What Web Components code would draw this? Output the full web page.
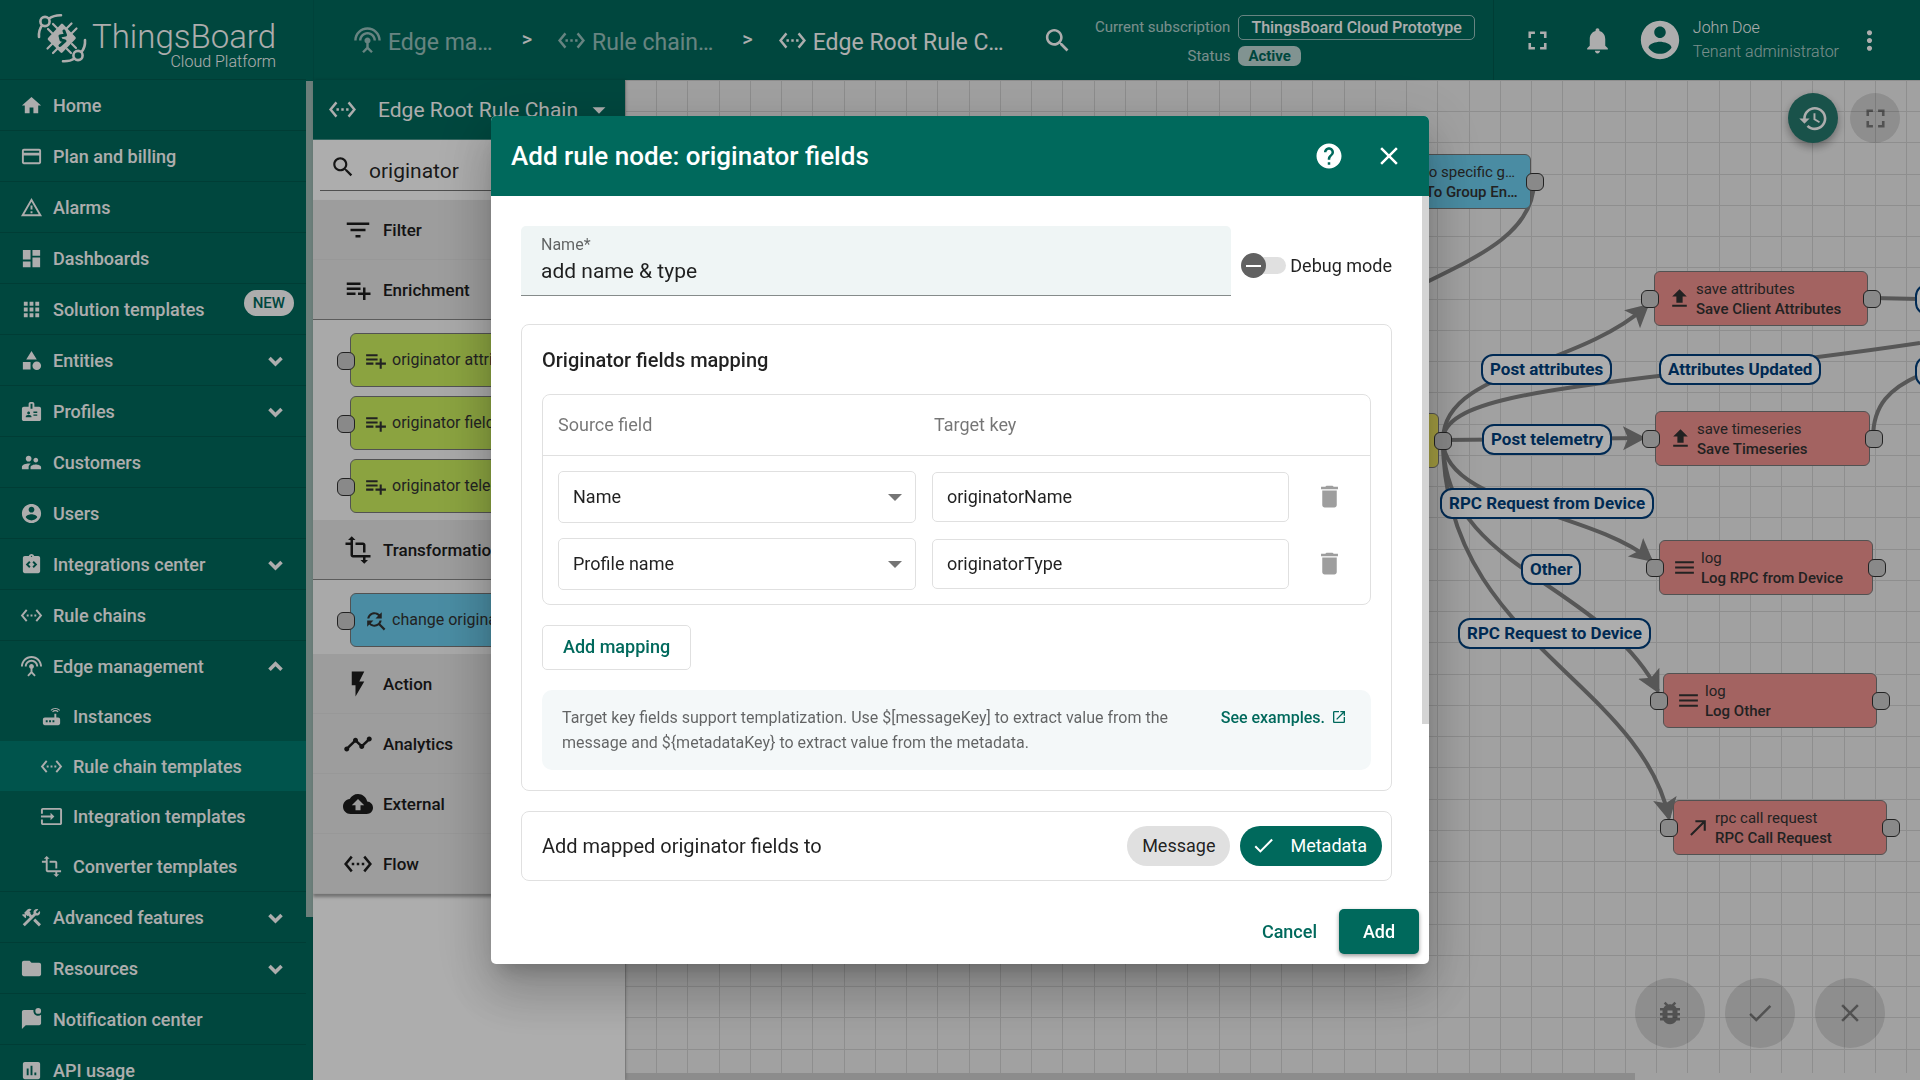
<!DOCTYPE html>
<html lang="en">
<head>
<meta charset="utf-8">
<title>ThingsBoard - Rule chain</title>
<style>
  html, body { height: 100%; }
  body { margin: 0; overflow: hidden; font-family: Roboto, "Open Sans", sans-serif; font-size: 18px; color: rgba(0,0,0,.87); --green: #00695c; --line: #e0e0e0; --ink: rgba(0,0,0,.87); }
</style>
</head>
<body>
<tb-app></tb-app>
<script>
const ICONS = {
  home: '<path d="M10 20v-6h4v6h5v-8h3L12 3 2 12h3v8z"/>',
  card: '<path d="M20 4H4c-1.11 0-1.99.89-1.99 2L2 18c0 1.11.89 2 2 2h16c1.11 0 2-.89 2-2V6c0-1.11-.89-2-2-2zm0 14H4v-7h16v7zm0-10H4V6h16v2z"/>',
  alert: '<path d="M12 2L1 21h22M12 6l7.53 13H4.47M11 10v4h2v-4m-2 6v2h2v-2"/>',
  dashboard: '<path d="M13 3v6h8V3M13 21h8V11h-8M3 21h8v-6H3M3 13h8V3H3v10z"/>',
  apps: '<path d="M4 8h4V4H4v4zm6 12h4v-4h-4v4zm-6 0h4v-4H4v4zm0-6h4v-4H4v4zm6 0h4v-4h-4v4zm6-10v4h4V4h-4zm-6 4h4V4h-4v4zm6 6h4v-4h-4v4zm0 6h4v-4h-4v4z"/>',
  category: '<path d="M12 2l-5.5 9h11zM3 13.5h8v8H3z"/><circle cx="17.5" cy="17.5" r="4.5"/>',
  badge: '<path fill-rule="evenodd" d="M20 7h-5V4c0-1.1-.9-2-2-2h-2c-1.1 0-2 .9-2 2v3H4c-1.1 0-2 .9-2 2v11c0 1.1.9 2 2 2h16c1.1 0 2-.9 2-2V9c0-1.1-.9-2-2-2zM9 12c.83 0 1.5.67 1.5 1.5S9.83 15 9 15s-1.5-.67-1.5-1.5S8.17 12 9 12zm3 6H6v-.75c0-1 2-1.5 3-1.5s3 .5 3 1.5V18zm1-9h-2V4h2v5zm5 7.5h-4V15h4v1.5zm0-3h-4V12h4v1.5z"/>',
  people: '<path d="M16.5 12c1.38 0 2.49-1.12 2.49-2.5S17.88 7 16.5 7 14 8.12 14 9.5s1.12 2.5 2.5 2.5zM9 11c1.66 0 2.99-1.34 2.99-3S10.66 5 9 5 6 6.34 6 8s1.34 3 3 3zm7.5 3c-1.83 0-5.5.92-5.5 2.75V19h11v-2.25c0-1.83-3.67-2.75-5.5-2.75zM9 13c-2.33 0-7 1.17-7 3.5V19h7v-2.25c0-.85.33-2.34 2.37-3.47C10.5 13.1 9.66 13 9 13z"/>',
  account: '<path fill-rule="evenodd" d="M12 2C6.48 2 2 6.48 2 12s4.48 10 10 10 10-4.48 10-10S17.52 2 12 2zm0 3c1.66 0 3 1.34 3 3s-1.34 3-3 3-3-1.34-3-3 1.34-3 3-3zm0 14.2c-2.5 0-4.71-1.28-6-3.22.03-1.99 4-3.08 6-3.08 1.99 0 5.97 1.09 6 3.08-1.29 1.94-3.5 3.22-6 3.22z"/>',
  integration: '<path fill-rule="evenodd" d="M19 3h-4.18C14.4 1.84 13.3 1 12 1s-2.4.84-2.82 2H5c-1.1 0-2 .9-2 2v14c0 1.1.9 2 2 2h14c1.1 0 2-.9 2-2V5c0-1.1-.9-2-2-2zm-8 11.17l-1.41 1.42L6 12l3.59-3.59L11 9.83 8.83 12 11 14.17zM12 4.25c-.41 0-.75-.34-.75-.75s.34-.75.75-.75.75.34.75.75-.34.75-.75.75zm2.41 11.34L13 14.17 15.17 12 13 9.83l1.41-1.41L18 12l-3.59 3.59z"/>',
  chain: '<path d="M7.77 6.76L6.23 5.48.82 12l5.41 6.52 1.54-1.28L3.42 12l4.35-5.24zM7 13h2v-2H7v2zm10-2h-2v2h2v-2zm-6 2h2v-2h-2v2zm6.77-7.52l-1.54 1.28L20.58 12l-4.35 5.24 1.54 1.28L23.18 12l-5.41-6.52z"/>',
  antenna: '<path d="M12 5c-3.87 0-7 3.13-7 7h2c0-2.76 2.24-5 5-5s5 2.24 5 5h2c0-3.87-3.13-7-7-7zm1 9.29c.88-.39 1.5-1.26 1.5-2.29 0-1.38-1.12-2.5-2.5-2.5S9.5 10.62 9.5 12c0 1.02.62 1.9 1.5 2.29v3.3L7.59 21 9 22.41l3-3 3 3L16.41 21 13 17.59v-3.3zM12 1C5.93 1 1 5.93 1 12h2c0-4.97 4.03-9 9-9s9 4.03 9 9h2c0-6.07-4.93-11-11-11z"/>',
  router: '<path fill-rule="evenodd" d="M20.2 5.9l.8-.8C19.6 3.7 17.8 3 16 3s-3.6.7-5 2.1l.8.8C13 4.8 14.5 4.2 16 4.2s3 .6 4.2 1.7zm-.9.8c-.9-.9-2.1-1.4-3.3-1.4s-2.4.5-3.3 1.4l.8.8c.7-.7 1.6-1 2.5-1s1.8.3 2.5 1l.8-.8zM19 13h-2V9h-2v4H5c-1.1 0-2 .9-2 2v4c0 1.1.9 2 2 2h14c1.1 0 2-.9 2-2v-4c0-1.1-.9-2-2-2zM8 18H6v-2h2v2zm3.5 0h-2v-2h2v2zm3.5 0h-2v-2h2v2z"/>',
  input: '<path d="M21 3.01H3c-1.1 0-2 .9-2 2V9h2V4.99h18v14.03H3V15H1v4.01c0 1.1.9 1.98 2 1.98h18c1.1 0 2-.88 2-1.98v-14c0-1.11-.9-2-2-2zM11 16l4-4-4-4v3H1v2h10v3z"/>',
  transform: '<path d="M22 18v-2H8V4h2L7 1 4 4h2v2H2v2h4v8c0 1.1.9 2 2 2h8v2h-2l3 3 3-3h-2v-2h4zM10 8h6v6h2V8c0-1.1-.9-2-2-2h-6v2z"/>',
  construction: '<path d="M13.78 15.3l6 6 2.11-2.16-6-6-2.11 2.16zM17.5 10c-.39 0-.81-.05-1.14-.19L4.97 21.25l-2.11-2.11 7.41-7.4L8.5 9.96l-.7.7-1.45-1.41v2.86l-.7.7L2.11 9.3l.7-.71h2.88L4.25 7.2l3.56-3.56c1.17-1.17 3.08-1.17 4.25 0L9.89 5.8l1.41 1.4-.7.71 1.79 1.78 1.82-1.88c-.14-.33-.2-.75-.2-1.12 0-1.99 1.57-3.52 3.52-3.52.59 0 1.11.14 1.58.42l-2.67 2.67 1.5 1.5 2.67-2.67c.28.47.42.97.42 1.6 0 1.92-1.55 3.31-3.73 3.31z"/>',
  folder: '<path d="M10 4H4c-1.1 0-1.99.9-1.99 2L2 18c0 1.1.9 2 2 2h16c1.1 0 2-.9 2-2V8c0-1.1-.9-2-2-2h-8l-2-2z"/>',
  message: '<path d="M22 7v9c0 1.1-.9 2-2 2H6l-4 4V4c0-1.1.9-2 2-2h10.1c-.1.32-.1.66-.1 1 0 2.76 2.24 5 5 5 1.13 0 2.16-.39 3-1z"/><circle cx="19" cy="3" r="3"/>',
  chart: '<path fill-rule="evenodd" d="M19 3H5c-1.1 0-2 .9-2 2v14c0 1.1.9 2 2 2h14c1.1 0 2-.9 2-2V5c0-1.1-.9-2-2-2zM9 17H7v-7h2v7zm4 0h-2V7h2v10zm4 0h-2v-3h2v3z"/>',
  down: '<path d="M3.5 8.5l8.5 8.5 8.5-8.5" fill="none" stroke="currentColor" stroke-width="5"/>',
  up: '<path d="M3.5 16.5L12 8l8.5 8.5" fill="none" stroke="currentColor" stroke-width="5"/>',
  filter: '<path d="M10 18h4v-2h-4v2zM3 6v2h18V6H3zm3 7h12v-2H6v2z"/>',
  enrich: '<path d="M14 10H3v2h11v-2zm0-4H3v2h11V6zm4 8v-4h-2v4h-4v2h4v4h2v-4h4v-2h-4zM3 16h7v-2H3v2z"/>',
  flash: '<path d="M7 2v11h3v9l7-12h-4l4-8z"/>',
  timeline: '<path d="M23 8c0 1.1-.9 2-2 2-.18 0-.35-.02-.51-.07l-3.56 3.55c.05.16.07.34.07.52 0 1.1-.9 2-2 2s-2-.9-2-2c0-.18.02-.36.07-.52l-2.55-2.55c-.16.05-.34.07-.52.07s-.36-.02-.52-.07l-4.55 4.56c.05.16.07.33.07.51 0 1.1-.9 2-2 2s-2-.9-2-2 .9-2 2-2c.18 0 .35.02.51.07l4.56-4.55C8.02 9.36 8 9.18 8 9c0-1.1.9-2 2-2s2 .9 2 2c0 .18-.02.36-.07.52l2.55 2.55c.16-.05.34-.07.52-.07s.36.02.52.07l3.55-3.56C19.02 8.35 19 8.18 19 8c0-1.1.9-2 2-2s2 .9 2 2z"/>',
  cloud: '<path d="M19.35 10.04C18.67 6.59 15.64 4 12 4 9.11 4 6.6 5.64 5.35 8.04 2.34 8.36 0 10.91 0 14c0 3.31 2.69 6 6 6h13c2.76 0 5-2.24 5-5 0-2.64-2.05-4.78-4.65-4.96zM14 13v4h-4v-4H7l5-5 5 5h-3z"/>',
  replace: '<path d="M11 6c1.38 0 2.63.56 3.54 1.46L12 10h6V4l-2.05 2.05C14.68 4.78 12.93 4 11 4c-3.53 0-6.43 2.61-6.92 6H6.1c.46-2.28 2.48-4 4.9-4zm5.64 9.14c.66-.9 1.12-1.97 1.28-3.14H15.9c-.46 2.28-2.48 4-4.9 4-1.38 0-2.63-.56-3.54-1.46L10 12H4v6l2.05-2.05C7.32 17.22 9.07 18 11 18c1.55 0 2.98-.51 4.14-1.36L20 21.49 21.49 20l-4.85-4.86z"/>',
  search: '<path d="M15.5 14h-.79l-.28-.27C15.41 12.59 16 11.11 16 9.5 16 5.91 13.09 3 9.5 3S3 5.91 3 9.5 5.91 16 9.5 16c1.61 0 3.09-.59 4.23-1.57l.27.28v.79l5 4.99L20.49 19l-4.99-5zm-6 0C7.01 14 5 11.99 5 9.5S7.01 5 9.5 5 14 7.01 14 9.5 11.99 14 9.5 14z"/>',
  fullscreen: '<path d="M7 14H5v5h5v-2H7v-3zm-2-4h2V7h3V5H5v5zm12 7h-3v2h5v-5h-2v3zM14 5v2h3v3h2V5h-5z"/>',
  bell: '<path d="M12 22c1.1 0 2-.9 2-2h-4c0 1.1.89 2 2 2zm6-6v-5c0-3.07-1.64-5.64-4.5-6.32V4c0-.83-.67-1.5-1.5-1.5s-1.5.67-1.5 1.5v.68C7.63 5.36 6 7.92 6 11v5l-2 2v1h16v-1l-2-2z"/>',
  more: '<path d="M12 8c1.1 0 2-.9 2-2s-.9-2-2-2-2 .9-2 2 .9 2 2 2zm0 2c-1.1 0-2 .9-2 2s.9 2 2 2 2-.9 2-2-.9-2-2-2zm0 6c-1.1 0-2 .9-2 2s.9 2 2 2 2-.9 2-2-.9-2-2-2z"/>',
  history: '<path d="M13 3c-4.97 0-9 4.03-9 9H1l3.89 3.89.07.14L9 12H6c0-3.87 3.13-7 7-7s7 3.13 7 7-3.13 7-7 7c-1.93 0-3.68-.79-4.94-2.06l-1.42 1.42C8.27 19.99 10.51 21 13 21c4.97 0 9-4.03 9-9s-4.03-9-9-9zm-1 5v5l4.28 2.54.72-1.21-3.5-2.08V8H12z"/>',
  help: '<path fill-rule="evenodd" d="M12 2C6.48 2 2 6.48 2 12s4.48 10 10 10 10-4.48 10-10S17.52 2 12 2zm1 17h-2v-2h2v2zm2.07-7.75l-.9.92C13.45 12.9 13 13.5 13 15h-2v-.5c0-1.1.45-2.1 1.17-2.83l1.24-1.26c.37-.36.59-.86.59-1.41 0-1.1-.9-2-2-2s-2 .9-2 2H8c0-2.21 1.79-4 4-4s4 1.79 4 4c0 .88-.36 1.68-.93 2.25z"/>',
  close: '<path d="M19 6.41L17.59 5 12 10.59 6.41 5 5 6.41 10.59 12 5 17.59 6.41 19 12 13.41 17.59 19 19 17.59 13.41 12z"/>',
  done: '<path d="M9 16.2L4.8 12l-1.4 1.4L9 19 21 7l-1.4-1.4L9 16.2z"/>',
  bug: '<path fill-rule="evenodd" d="M20 8h-2.81c-.45-.78-1.07-1.45-1.82-1.96L17 4.41 15.59 3l-2.17 2.17C12.96 5.06 12.49 5 12 5s-.96.06-1.41.17L8.41 3 7 4.41l1.62 1.63C7.88 6.55 7.26 7.22 6.81 8H4v2h2.09c-.05.33-.09.66-.09 1v1H4v2h2v1c0 .34.04.67.09 1H4v2h2.81c1.04 1.79 2.97 3 5.19 3s4.15-1.21 5.19-3H20v-2h-2.09c.05-.33.09-.66.09-1v-1h2v-2h-2v-1c0-.34-.04-.67-.09-1H20V8zm-6 8h-4v-2h4v2zm0-4h-4v-2h4v2z"/>',
  trash: '<path d="M6 19c0 1.1.9 2 2 2h8c1.1 0 2-.9 2-2V7H6v12zM19 4h-3.5l-1-1h-5l-1 1H5v2h14V4z"/>',
  open: '<path d="M19 19H5V5h7V3H5c-1.11 0-2 .9-2 2v14c0 1.1.89 2 2 2h14c1.1 0 2-.9 2-2v-7h-2v7zM14 3v2h3.59l-9.83 9.83 1.41 1.41L19 6.41V10h2V3h-7z"/>',
  upload: '<path d="M9 16h6v-6h4l-7-7-7 7h4zm-4 2h14v2H5z"/>',
  menu: '<path d="M3 18h18v-2H3v2zm0-5h18v-2H3v2zm0-7v2h18V6H3z"/>',
  call: '<path d="M9 5v2h6.59L4 18.59 5.41 20 17 8.41V15h2V5z"/>',
  caret: '<path d="M5 9l7 7 7-7z"/>'
};

const BASE = `
  *, *::before, *::after { box-sizing: border-box; }
  button, input, select { font: inherit; color: inherit; margin: 0; }
  button { border: 0; background: none; padding: 0; cursor: pointer; }
  a { color: inherit; text-decoration: none; }
`;

function define(name, css, html) {
  customElements.define(name, class extends HTMLElement {
    connectedCallback() {
      if (this.shadowRoot) return;
      const root = this.attachShadow({ mode: 'open' });
      root.innerHTML = `<style>${BASE}${css}</style>${typeof html === 'function' ? html(this) : html}`;
    }
  });
}

define('tb-icon',
  `:host { display: inline-flex; flex: none; width: var(--size, 24px); height: var(--size, 24px); }
   svg { width: 100%; height: 100%; fill: currentColor; display: block; }`,
  el => `<svg viewBox="0 0 24 24" aria-hidden="true">${ICONS[el.getAttribute('name')]}</svg>`);

/* ---------- side menu ---------- */
define('tb-logo',
  `:host { display: flex; height: 79px; flex: none; padding-left: 30px; align-items: flex-start; color: #fff; }
   svg { width: 62px; height: 64px; margin-top: 8px; flex: none; }
   .text { display: flex; flex-direction: column; align-items: flex-end; padding-top: 18px; }
   .name { font-size: 33px; line-height: 38px; font-weight: 300; }
   .sub { font-size: 16px; line-height: 12px; font-weight: 300; }`,
  `<svg viewBox="0 0 64 64" preserveAspectRatio="xMinYMin slice" fill="none" stroke="#fff" stroke-width="2.6" stroke-linecap="round" aria-hidden="true">
     <circle cx="15" cy="13.500" r="4.600"/><circle cx="48" cy="47.500" r="4.600"/>
     <path d="M19 10.500Q24 7 31 7.200M12 17.500Q8.500 22 9 29M44.500 50.500Q40 53.500 33 53.200M51.500 44Q55.500 39 55 32"/>
     <path stroke-width="2.200" d="M22 25l-4-4M27 20l-4-4M37 20l4.500-4.500M42 25l4.500-4.500M22 36l-4.500 4.500M27 41l-4 4M37 41l4 4M42 36l4 4"/>
     <path fill="#fff" stroke-linejoin="round" d="M32 17l12.500 13L31.500 43.500 19 31z"/>
     <path stroke="#00695c" stroke-width="3" stroke-linejoin="round" d="M34 23l1.500 4-5.500 1 1 4 4 1-5 4.500"/>
   </svg>
   <div class="text"><span class="name">ThingsBoard</span><span class="sub">Cloud Platform</span></div>`);

define('tb-menu-item',
  `:host { display: block; color: #fff; border-top: 1px solid rgba(0,0,0,.14); font-weight: 500; }
   :host([sub]) { border-top: 0; }
   a { display: flex; align-items: center; height: 50px; gap: 10px; padding: 0 22px 0 20px; --size: 23px; }
   :host([sub]) a { padding-left: 40px; }
   :host([selected]) a { background: #007d71; }
   .label { flex: 1; white-space: nowrap; }
   .chev { --size: 17px; }
   .badge { align-self: flex-start; margin: 6px -10px 0 0; height: 26px; border-radius: 13px; background: #fff; color: var(--green); font-size: 15px; line-height: 27px; padding: 0 9px; }`,
  el => `<a href="#"><tb-icon name="${el.getAttribute('icon')}"></tb-icon><span class="label"><slot></slot></span>` +
    (el.hasAttribute('badge') ? `<span class="badge">${el.getAttribute('badge')}</span>` : '') +
    (el.hasAttribute('toggle') ? `<tb-icon class="chev" name="${el.getAttribute('toggle')}"></tb-icon>` : '') + `</a>`);

define('tb-sidebar',
  `:host { display: flex; flex-direction: column; width: 313px; flex: none; background: var(--green); overflow: hidden; }
   .scroll { flex: 1; min-height: 0; display: flex; overflow: hidden; }
   nav { flex: 1; }
   .bar { width: 7px; }
   .thumb { height: 836px; margin-top: 2px; background: #9fbbb5; }`,
  `<tb-logo></tb-logo>
   <div class="scroll"><nav>
     <tb-menu-item icon="home">Home</tb-menu-item>
     <tb-menu-item icon="card">Plan and billing</tb-menu-item>
     <tb-menu-item icon="alert">Alarms</tb-menu-item>
     <tb-menu-item icon="dashboard">Dashboards</tb-menu-item>
     <tb-menu-item icon="apps" badge="NEW">Solution templates</tb-menu-item>
     <tb-menu-item icon="category" toggle="down">Entities</tb-menu-item>
     <tb-menu-item icon="badge" toggle="down">Profiles</tb-menu-item>
     <tb-menu-item icon="people">Customers</tb-menu-item>
     <tb-menu-item icon="account">Users</tb-menu-item>
     <tb-menu-item icon="integration" toggle="down">Integrations center</tb-menu-item>
     <tb-menu-item icon="chain">Rule chains</tb-menu-item>
     <tb-menu-item icon="antenna" toggle="up">Edge management</tb-menu-item>
     <tb-menu-item sub icon="router">Instances</tb-menu-item>
     <tb-menu-item sub selected icon="chain">Rule chain templates</tb-menu-item>
     <tb-menu-item sub icon="input">Integration templates</tb-menu-item>
     <tb-menu-item sub icon="transform">Converter templates</tb-menu-item>
     <tb-menu-item icon="construction" toggle="down">Advanced features</tb-menu-item>
     <tb-menu-item icon="folder" toggle="down">Resources</tb-menu-item>
     <tb-menu-item icon="message">Notification center</tb-menu-item>
     <tb-menu-item icon="chart">API usage</tb-menu-item>
   </nav><div class="bar"><div class="thumb"></div></div></div>`);

/* ---------- top toolbar ---------- */
define('tb-crumb',
  `:host { display: flex; color: #fff; }
   a { display: flex; align-items: center; gap: 6px; --size: 29px; font-size: 23px; line-height: 28px; white-space: nowrap; }
   :host([dim]) a { opacity: .6; }
   span { padding-top: 5px; }`,
  el => `<a href="#"><tb-icon name="${el.getAttribute('icon')}"></tb-icon><span><slot></slot></span></a>`);

define('tb-toolbar',
  `:host { display: flex; align-items: center; height: 80px; flex: none; background: var(--green); color: #fff; padding: 0 35px 0 40px; box-shadow: inset 1px 0 rgba(0,0,0,.06); }
   nav { display: flex; align-items: center; flex: 1; }
   .sep { font-size: 20px; line-height: 28px; font-weight: 500; padding: 0 25px 2px 29px; }
   button { display: flex; --size: 31px; }
   dl { display: grid; grid-template-columns: auto auto; column-gap: 8px; row-gap: 6px; align-items: center; justify-items: start; margin: 0 18px 0 22px; font-size: 15px; line-height: 18px; }
   dt { justify-self: end; opacity: .7; }
   dd { margin: 0; border-radius: 5px; }
   .plan { border: 1px solid rgba(255,255,255,.6); padding: 3px 12px; height: 25px; line-height: 17px; font-size: 16px; font-weight: 500; }
   .state { background: rgba(255,255,255,.75); color: var(--green); font-weight: 700; padding: 1px 10px; height: 20px; border-radius: 7px; }
   .actions { display: flex; align-items: center; height: 80px; border-left: 1px solid rgba(0,0,0,.14); padding-left: 28px; }
   .bell { margin: 0 24px 0 29px; }
   .avatar { --size: 46px; }
   .user { margin: 0 15px 0 10px; font-size: 16px; line-height: 24px; font-weight: 300; }
   .role { opacity: .7; }`,
  `<nav aria-label="Breadcrumb">
     <tb-crumb dim icon="antenna">Edge ma…</tb-crumb><span class="sep">&gt;</span>
     <tb-crumb dim icon="chain">Rule chain…</tb-crumb><span class="sep">&gt;</span>
     <tb-crumb icon="chain">Edge Root Rule C…</tb-crumb>
   </nav>
   <button aria-label="Search"><tb-icon name="search"></tb-icon></button>
   <dl><dt>Current subscription</dt><dd class="plan">ThingsBoard Cloud Prototype</dd><dt>Status</dt><dd class="state">Active</dd></dl>
   <div class="actions">
     <button aria-label="Fullscreen"><tb-icon name="fullscreen"></tb-icon></button>
     <button class="bell" aria-label="Notifications"><tb-icon name="bell"></tb-icon></button>
     <tb-icon class="avatar" name="account"></tb-icon>
     <div class="user"><div>John Doe</div><div class="role">Tenant administrator</div></div>
     <button aria-label="More"><tb-icon name="more"></tb-icon></button>
   </div>`);

/* ---------- rule nodes ---------- */
define('rule-node',
  `:host { display: flex; align-items: center; position: relative; height: 55px; padding-left: 12px; gap: 4px;
     border: 1px solid #7a7a7a; border-radius: 6px; color: #333; font-size: 15px; line-height: 20px; --size: 25px; background: #f1928f; }
   :host([kind=enrichment]) { background: #cdf15f; }
   :host([kind=transformation]) { background: #6dcff0; }
   :host([kind=filter]) { background: #f1e861; }
   :host([library]) { height: 54px; font-size: 16px; width: 240px; }
   .text { display: flex; flex-direction: column; white-space: nowrap; overflow: hidden; }
   .name { font-weight: 500; }
   .pin { position: absolute; top: 18px; width: 18px; height: 18px; border: 1px solid #333; border-radius: 6px; background: #cbcbcb; }
   .in { left: -14px; } .out { right: -14px; }`,
  el => {
    const pins = el.getAttribute('pins') || 'both';
    return `<tb-icon name="${el.getAttribute('icon')}"></tb-icon><div class="text"><span><slot></slot></span>` +
      (el.hasAttribute('name') ? `<span class="name">${el.getAttribute('name')}</span>` : '') + `</div>` +
      (pins !== 'out' ? '<i class="pin in"></i>' : '') + (pins !== 'in' ? '<i class="pin out"></i>' : '');
  });

define('link-label',
  `:host { display: block; height: 31px; min-width: 40px; border: 2px solid #003f7c; border-radius: 12px; background: #fff; color: #003f7c;
     font-size: 17px; line-height: 27px; font-weight: 700; padding: 0 7px; white-space: nowrap; }`,
  `<slot></slot>`);

define('library-group',
  `:host { display: block; }
   button { display: flex; align-items: center; width: 100%; height: 60px; padding-left: 30px; gap: 10px; background: #e7e7e7; border-bottom: 1px solid #e0e0e0; font-size: 17px; font-weight: 500; --size: 30px; color: #1c1c1c; }
   :host([open]) button { border-bottom-color: #888; }
   .body { display: none; }
   :host([open]) .body { display: flex; flex-direction: column; gap: 9px; padding: 13px 0 7px 37px; background: #fafafa; }`,
  el => `<button aria-expanded="${el.hasAttribute('open')}"><tb-icon name="${el.getAttribute('icon')}"></tb-icon>${el.getAttribute('label')}</button><div class="body"><slot></slot></div>`);

define('rule-library',
  `:host { display: flex; flex-direction: column; width: 312px; flex: none; background: #fff; overflow: hidden; position: relative; box-shadow: 1px 0 3px rgba(0,0,0,.2); z-index: 1; }
   .head { display: flex; align-items: center; height: 60px; flex: none; background: var(--green); border-bottom: 1px solid #4d968d; color: #fff; font-size: 21px; padding-left: 15px; --size: 29px; white-space: nowrap; }
   .head span { margin: 0 10px 0 21px; }
   .head .caret { --size: 22px; }
   .search { display: flex; align-items: center; height: 51px; flex: none; margin: 0 7px 9px; border-bottom: 1px solid #757575; }
   .search tb-icon { --size: 26px; margin: 3px 13px 0 10px; }
   .search input { flex: 1; min-width: 0; border: 0; background: none; outline: 0; font-size: 21px; padding: 12px 0 0; }
   .groups { box-shadow: 0 3px 3px rgba(0,0,0,.35); }`,
  `<div class="head"><tb-icon name="chain"></tb-icon><span>Edge Root Rule Chain</span><tb-icon class="caret" name="caret"></tb-icon></div>
   <div class="search"><tb-icon name="search"></tb-icon><input type="text" value="originator" aria-label="Search nodes"></div>
   <div class="groups">
     <library-group icon="filter" label="Filter"></library-group>
     <library-group open icon="enrich" label="Enrichment">
       <rule-node library pins="in" kind="enrichment" icon="enrich">originator attributes</rule-node>
       <rule-node library pins="in" kind="enrichment" icon="enrich">originator fields</rule-node>
       <rule-node library pins="in" kind="enrichment" icon="enrich">originator telemetry</rule-node>
     </library-group>
     <library-group open icon="transform" label="Transformation">
       <rule-node library pins="in" kind="transformation" icon="replace">change originator</rule-node>
     </library-group>
     <library-group icon="flash" label="Action"></library-group>
     <library-group icon="timeline" label="Analytics"></library-group>
     <library-group icon="cloud" label="External"></library-group>
     <library-group icon="chain" label="Flow"></library-group>
   </div>`);

/* ---------- canvas: nodes, labels and edges sit at their own diagram coordinates ---------- */
const NODES = [
  [692, 74, 214, 'transformation', 'replace', 'duplicate to specific g…', 'Duplicate To Group En…', 'out'],
  [600, 333, 214, 'filter', 'filter', 'message type switch', 'Message Type Switch', 'out'],
  [1029, 191, 214, '', 'upload', 'save attributes', 'Save Client Attributes'],
  [1030, 331, 215, '', 'upload', 'save timeseries', 'Save Timeseries'],
  [1034, 460, 214, '', 'menu', 'log', 'Log RPC from Device'],
  [1038, 593, 214, '', 'menu', 'log', 'Log Other'],
  [1048, 720, 214, '', 'call', 'rpc call request', 'RPC Call Request']
];
const LABELS = [
  [856, 274, 'Post attributes'], [1034, 274, 'Attributes Updated'], [857, 344, 'Post telemetry'],
  [815, 408, 'RPC Request from Device'], [896, 474, 'Other'], [833, 538, 'RPC Request to Device'],
  [1290, 204, ''], [1290, 276, '']
];
const EDGES = [
  ['M818 360C818 290 950 290 1022 226', 1], ['M818 360C818 305 1015 305 1295 263', 0],
  ['M818 360L1018 358', 1], ['M818 360C818 425 965 430 1026 480', 1],
  ['M818 360C818 490 975 500 1033 611', 1], ['M818 360C818 560 1015 600 1044 738', 1],
  ['M909 101C909 155 850 178 775 215', 0], ['M1248 218L1295 219', 0], ['M1248 358C1248 325 1265 308 1295 295', 0]
];
define('rule-canvas',
  `:host { display: block; flex: 1; position: relative; overflow: hidden; background: #eee; }
   svg.grid { position: absolute; width: 100%; height: calc(100% - 7px); }
   rule-node, link-label, .pinned { position: absolute; }
   .fab { width: 70px; height: 70px; border-radius: 50%; display: grid; place-items: center; background: rgba(0,0,0,.12); color: rgba(0,0,0,.42); --size: 30px; }
   .top { position: absolute; top: 13px; right: 20px; display: flex; gap: 12px; }
   .top .fab { width: 50px; height: 50px; --size: 31px; }
   .top .fab.on { background: #26796e; color: #fff; box-shadow: 0 4px 8px rgba(0,0,0,.35); }
   .bottom { position: absolute; right: 35px; bottom: 32px; display: flex; gap: 20px; }
   .hbar { position: absolute; left: 0; bottom: 0; height: 7px; width: 78%; background: #cecece; }`,
  () => `<svg class="grid" aria-hidden="true">
      <defs>
        <pattern id="g" width="125" height="125" patternUnits="userSpaceOnUse">
          <path d="M0 0h1v125H0zM31 0h1v125h-1zM62 0h1v125h-1zM94 0h1v125h-1zM0 0h125v1H0zM0 31h125v1H0zM0 62h125v1H0zM0 94h125v1H0z" fill="#000" fill-opacity=".12"/>
        </pattern>
        <marker id="a" markerUnits="userSpaceOnUse" markerWidth="24" markerHeight="26" refX="20" refY="12" orient="auto"><path d="M0 0L23 12 0 24 5 12z" fill="#808080"/></marker>
      </defs>
      <rect width="100%" height="100%" fill="url(#g)"/>
      ${EDGES.map(([d, arrow]) => `<path d="${d}" fill="none" stroke="#808080" stroke-width="4"${arrow ? ' marker-end="url(#a)"' : ''}/>`).join('')}
    </svg>
    ${NODES.map(([x, y, w, kind, icon, type, name, pins]) => `<rule-node style="left:${x}px;top:${y}px;width:${w}px" kind="${kind}" icon="${icon}" name="${name}" pins="${pins || 'both'}">${type}</rule-node>`).join('')}
    ${LABELS.map(([x, y, t]) => `<link-label style="left:${x}px;top:${y}px">${t}</link-label>`).join('')}
    <div class="top"><button class="fab on" aria-label="History"><tb-icon name="history"></tb-icon></button><button class="fab" aria-label="Expand"><tb-icon name="fullscreen"></tb-icon></button></div>
    <div class="bottom"><button class="fab" aria-label="Reset debug"><tb-icon name="bug"></tb-icon></button><button class="fab" aria-label="Apply"><tb-icon name="done"></tb-icon></button><button class="fab" aria-label="Discard"><tb-icon name="close"></tb-icon></button></div>
    <div class="hbar"></div>`);

/* ---------- dialog ---------- */
define('tb-panel',
  `:host { display: block; border: 1px solid var(--line); border-radius: 8px; }`, `<slot></slot>`);

define('mapping-table',
  `:host { display: block; border: 1px solid var(--line); border-radius: 8px; }
   table { width: 100%; border-collapse: collapse; table-layout: fixed; }
   th { font-weight: 400; text-align: left; color: rgba(0,0,0,.54); height: 60px; padding: 0 0 0 15px; border-bottom: 1px solid var(--line); }
   th + th { padding-left: 18px; }
   td { padding: 15px 0 0 15px; height: 66px; vertical-align: top; }
   td + td { padding: 16px 0 0 16px; }
   th:last-child, td:last-child { width: 81px; padding-left: 0; text-align: center; }
   .pick { display: grid; align-items: center; }
   .pick > * { grid-area: 1 / 1; }
   .pick tb-icon { justify-self: end; margin-right: 9px; color: #757575; --size: 24px; pointer-events: none; }
   select, input { width: 100%; border: 1px solid var(--line); border-radius: 5px; background: #fff; padding: 0 14px; outline: 0; appearance: none; }
   select { height: 52px; } input { height: 50px; }
   button { color: #9e9e9e; --size: 29px; height: 50px; }
   button tb-icon { vertical-align: middle; }
   tbody { border-bottom: 14px solid transparent; }`,
  () => {
    const row = (f, k) => `<tr><td><div class="pick"><select aria-label="Source field"><option>${f}</option></select><tb-icon name="caret"></tb-icon></div></td>
      <td><input type="text" aria-label="Target key" value="${k}"></td><td><button aria-label="Remove"><tb-icon name="trash"></tb-icon></button></td></tr>`;
    return `<table><thead><tr><th>Source field</th><th>Target key</th><th></th></tr></thead><tbody>${row('Name', 'originatorName')}${row('Profile name', 'originatorType')}</tbody></table>`;
  });

define('debug-toggle',
  `:host { display: block; }
   label { display: flex; align-items: center; gap: 4px; white-space: nowrap; }
   input { appearance: none; width: 45px; height: 25px; display: grid; align-items: center; }
   input::before, input::after { content: ""; grid-area: 1 / 1; }
   input::before { width: 36px; height: 17px; border-radius: 9px; justify-self: end; background: #e0e0e0; }
   input::after { width: 25px; height: 25px; border-radius: 50%; background: linear-gradient(#fff, #fff) center / 15px 2px no-repeat #616161; }`,
  `<label><input type="checkbox" role="switch">Debug mode</label>`);

define('target-choice',
  `:host { display: flex; gap: 10px; }
   label { position: relative; display: flex; align-items: center; height: 40px; padding: 0 15px; border-radius: 20px; background: #e0e0e0; --size: 25px; cursor: pointer; }
   label.on { background: var(--green); color: #fff; }
   label.on tb-icon { margin-right: 14px; margin-left: -4px; }
   input { appearance: none; position: absolute; inset: 0; border-radius: 20px; }`,
  `<label><input type="radio" name="to">Message</label>
   <label class="on"><input type="radio" name="to" checked><tb-icon name="done"></tb-icon>Metadata</label>`);

define('add-node-dialog',
  `:host { display: flex; flex-direction: column; width: 938px; max-width: 90%; background: #fff; border-radius: 5px; overflow: hidden;
     box-shadow: 0 14px 19px -9px rgba(0,0,0,.2), 0 30px 48px 4px rgba(0,0,0,.14), 0 11px 58px 10px rgba(0,0,0,.12); }
   header { display: flex; align-items: center; height: 80px; background: var(--green); color: #fff; padding: 0 25px 0 20px; }
   h2 { flex: 1; margin: 0; font-size: 26px; line-height: 30px; font-weight: 500; }
   header button { display: flex; --size: 30px; margin-left: 30px; }
   .content { display: flex; height: 698px; overflow: hidden; }
   .form { flex: 1; min-width: 0; padding: 30px 30px 0; display: flex; flex-direction: column; }
   .bar { width: 7px; } .thumb { height: 528px; background: #d4d4d4; }
   .top { display: flex; align-items: center; gap: 10px; margin-bottom: 28px; }
   .field { flex: 1; display: flex; flex-direction: column; height: 70px; background: #eff5f5; border-bottom: 1px solid #858b8a; border-radius: 5px 5px 0 0; padding: 9px 20px 0; }
   debug-toggle { padding-top: 9px; }
   .field label { font-size: 16px; line-height: 20px; color: rgba(0,0,0,.6); }
   .field input { border: 0; background: none; outline: 0; padding: 0; font-size: 21px; line-height: 32px; height: 32px; }
   .mapping { padding: 20px; margin-bottom: 20px; }
   h3 { margin: 0 0 19px; font-size: 20px; line-height: 30px; font-weight: 500; }
   .add { display: block; margin: 20px 0; height: 45px; padding: 0 20px 1px; border: 1px solid var(--line); border-radius: 5px; color: var(--green); font-weight: 500; }
   .hint { display: flex; justify-content: space-between; align-items: flex-start; background: #f4f8f9; border-radius: 10px; padding: 15px 24px 15px 20px; font-size: 16px; line-height: 25px; color: rgba(0,0,0,.6); }
   .hint p { margin: 0; max-width: 630px; }
   .hint a { display: flex; align-items: center; gap: 6px; color: var(--green); font-weight: 500; font-size: 16px; --size: 16px; }
   .target { display: flex; align-items: center; justify-content: space-between; height: 70px; padding: 0 9px 0 20px; font-size: 20px; }
   target-choice { font-size: 18px; }
   footer { display: flex; justify-content: flex-end; align-items: flex-end; height: 70px; padding: 0 10px 10px; font-weight: 500; }
   .cancel { height: 45px; padding: 0 22px; color: var(--green); }
   .ok { height: 45px; width: 80px; border-radius: 5px; background: var(--green); color: #fff; box-shadow: 0 2px 4px rgba(0,0,0,.4); }`,
  `<header><h2>Add rule node: originator fields</h2>
     <button aria-label="Help"><tb-icon name="help"></tb-icon></button><button aria-label="Close"><tb-icon name="close"></tb-icon></button></header>
   <div class="content">
     <div class="form">
       <div class="top">
         <div class="field"><label for="name">Name*</label><input id="name" type="text" value="add name &amp; type"></div>
         <debug-toggle></debug-toggle>
       </div>
       <tb-panel class="mapping">
         <h3>Originator fields mapping</h3>
         <mapping-table></mapping-table>
         <button class="add">Add mapping</button>
         <div class="hint"><p>Target key fields support templatization. Use $[messageKey] to extract value from the message and \${metadataKey} to extract value from the metadata.</p>
           <a href="#">See examples.<tb-icon name="open"></tb-icon></a></div>
       </tb-panel>
       <tb-panel class="target"><span>Add mapped originator fields to</span><target-choice></target-choice></tb-panel>
     </div>
     <div class="bar"><div class="thumb"></div></div>
   </div>
   <footer><button class="cancel">Cancel</button><button class="ok">Add</button></footer>`);

define('tb-app',
  `:host { display: flex; height: 100vh; }
   .main { flex: 1; min-width: 0; display: flex; flex-direction: column; }
   .work { flex: 1; min-height: 0; display: flex; }
   .overlay { position: fixed; inset: 0; z-index: 10; display: grid; place-items: center; background: rgba(0,0,0,.32); }`,
  `<tb-sidebar></tb-sidebar>
   <div class="main"><tb-toolbar></tb-toolbar><div class="work"><rule-library></rule-library><rule-canvas></rule-canvas></div></div>
   <div class="overlay"><add-node-dialog role="dialog" aria-modal="true" aria-label="Add rule node"></add-node-dialog></div>`);
</script>
</body>
</html>
